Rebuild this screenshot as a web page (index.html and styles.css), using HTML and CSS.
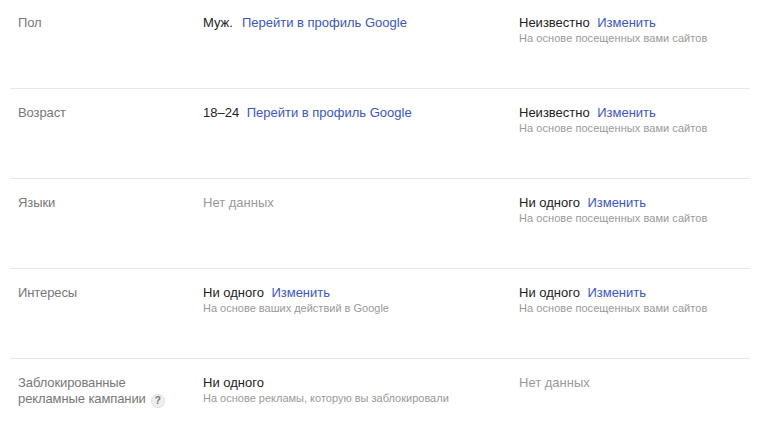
FILE: index.html
```html
<!DOCTYPE html>
<html lang="ru">
<head>
<meta charset="utf-8">
<title>Настройки</title>
<link rel="stylesheet" href="styles.css">
</head>
<body>
<div class="table">
  <div class="row">
    <div class="label">Пол</div>
    <div class="cell"><div class="main"><span class="val">Муж.</span><a class="link gap-l">Перейти в профиль Google</a></div></div>
    <div class="cell"><div class="main"><span class="val">Неизвестно</span><a class="link">Изменить</a></div><div class="sub">На основе посещенных вами сайтов</div></div>
  </div>
  <div class="row">
    <div class="label">Возраст</div>
    <div class="cell"><div class="main"><span class="val">18–24</span><a class="link">Перейти в профиль Google</a></div></div>
    <div class="cell"><div class="main"><span class="val">Неизвестно</span><a class="link">Изменить</a></div><div class="sub">На основе посещенных вами сайтов</div></div>
  </div>
  <div class="row">
    <div class="label">Языки</div>
    <div class="cell"><div class="main muted">Нет данных</div></div>
    <div class="cell"><div class="main"><span class="val">Ни одного</span><a class="link">Изменить</a></div><div class="sub">На основе посещенных вами сайтов</div></div>
  </div>
  <div class="row">
    <div class="label">Интересы</div>
    <div class="cell"><div class="main"><span class="val">Ни одного</span><a class="link">Изменить</a></div><div class="sub">На основе ваших действий в Google</div></div>
    <div class="cell"><div class="main"><span class="val">Ни одного</span><a class="link">Изменить</a></div><div class="sub">На основе посещенных вами сайтов</div></div>
  </div>
  <div class="row">
    <div class="label">Заблокированные<br>рекламные кампании<span class="help">?</span></div>
    <div class="cell"><div class="main"><span class="val">Ни одного</span></div><div class="sub">На основе рекламы, которую вы заблокировали</div></div>
    <div class="cell"><div class="main muted">Нет данных</div></div>
  </div>
</div>
</body>
</html>
```
FILE: styles.css
```css
html, body { margin: 0; padding: 0; background: #fff; }
body { font-family: "Liberation Sans", Arial, sans-serif; font-size: 13px; line-height: 16px; color: #222; height: 431px; overflow: hidden; }
.table { margin: 0 10px; display: flex; flex-direction: column; }
.row { display: grid; grid-template-columns: 193px 316px 1fr; height: 73px; padding-top: 15px; }
.row + .row { border-top: 1px solid #e8e8e8; padding-top: 16px; }
.label { color: #777; padding-left: 8px; letter-spacing: -0.1px; }
.main { color: #222; }
.val { margin-right: 7.5px; }
.gap-l { margin-left: 1.5px; }
.link { color: #3b56c4; }
.muted { color: #999; }
.sub { font-size: 11px; color: #999; line-height: 14px; }
.cell:last-child .sub { letter-spacing: 0.06px; }
.help { display: inline-block; width: 14px; height: 14px; border-radius: 50%; background: #eee; border: 1px solid #ddd; box-sizing: border-box; font-size: 10px; font-weight: bold; line-height: 12px; text-align: center; color: #777; margin-left: 5px; vertical-align: -1px; letter-spacing: 0; }
```
